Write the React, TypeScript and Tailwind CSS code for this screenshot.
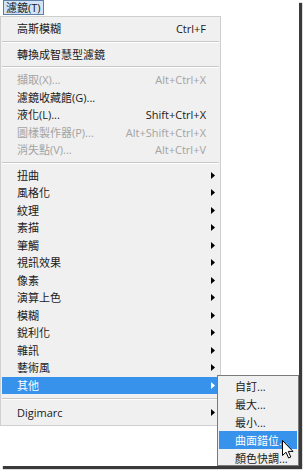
type Item = {
  label: string;
  shortcut?: string;
  disabled?: boolean;
  sub?: boolean;
  active?: boolean;
};

const top: Item[] = [{ label: "高斯模糊", shortcut: "Ctrl+F" }];
const smart: Item[] = [{ label: "轉換成智慧型濾鏡" }];
const tools: Item[] = [
  { label: "擷取(X)...", shortcut: "Alt+Ctrl+X", disabled: true },
  { label: "濾鏡收藏館(G)..." },
  { label: "液化(L)...", shortcut: "Shift+Ctrl+X" },
  { label: "圖樣製作器(P)...", shortcut: "Alt+Shift+Ctrl+X", disabled: true },
  { label: "消失點(V)...", shortcut: "Alt+Ctrl+V", disabled: true },
];
const groups: Item[] = [
  "扭曲",
  "風格化",
  "紋理",
  "素描",
  "筆觸",
  "視訊效果",
  "像素",
  "演算上色",
  "模糊",
  "銳利化",
  "雜訊",
  "藝術風",
].map((label) => ({ label, sub: true }));
groups.push({ label: "其他", sub: true, active: true });
const plugins: Item[] = [{ label: "Digimarc", sub: true }];

const others = ["自訂...", "最大...", "最小...", "曲面錯位...", "顏色快調..."];

export default function App() {
  return (
    <div className="h-[472px] w-[304px] bg-white font-['Open_Sans','Noto_Sans_CJK_TC',sans-serif] text-[11px] leading-none text-[#1a1a1a]">
      <div className="relative h-[466px] w-[299px] bg-white shadow-[3px_3px_1px_#3a3a3a]">
        {/* menu bar */}
        <div className="ml-[3px] flex h-[15px] w-[41px] items-center border border-[#5b7fa6] bg-[#d3e4f6] pl-[2px]">
          濾鏡(T)
        </div>

        {/* filter menu */}
        <div className="mt-[1px] w-[221px] border border-[#cfcfcf] bg-[#f0f0f0] px-[1px] py-[3px]">
          {top.map((it) => (
            <Row key={it.label} item={it} />
          ))}
          <Separator />
          {smart.map((it) => (
            <Row key={it.label} item={it} />
          ))}
          <Separator />
          {tools.map((it) => (
            <Row key={it.label} item={it} />
          ))}
          <Separator />
          {groups.map((it) => (
            <Row key={it.label} item={it} />
          ))}
          <div className="my-[4px] border-t border-b border-t-[#c8c8c8] border-b-white" />
          {plugins.map((it) => (
            <Row key={it.label} item={it} />
          ))}
        </div>

        {/* 其他 submenu */}
        <div className="absolute left-[217px] top-[375px] h-[91px] w-[82px] border border-[#7a7a7a] bg-[#f0f0f0] px-[1px] pt-[1px]">
          {others.map((label) => (
            <div
              key={label}
              className={
                label === "曲面錯位..."
                  ? "flex h-[18px] items-center bg-[#3692ea] pl-[16px] text-white"
                  : "flex h-[18px] items-center pl-[16px]"
              }
            >
              {label}
            </div>
          ))}
        </div>

        {/* mouse pointer */}
        <svg
          className="absolute left-[282px] top-[440px]"
          width="12"
          height="19"
          viewBox="0 0 12 19"
          aria-hidden="true"
        >
          <path
            d="M0.5 0.5 L0.5 15.5 L4 12.2 L6.6 18 L8.8 17 L6.3 11.4 L11 11.4 Z"
            fill="#fff"
            stroke="#000"
            strokeWidth="1"
            strokeLinejoin="round"
          />
        </svg>
      </div>
    </div>
  );
}

function Row({ item }: { item: Item }) {
  const tone = item.active
    ? "bg-[#3692ea] text-white"
    : item.disabled
      ? "text-[#a3a3a3]"
      : "";
  return (
    <div className={`flex h-[17.5px] items-center pl-[15px] pr-[4px] ${tone}`}>
      <span className="flex-1">{item.label}</span>
      {item.shortcut && <span>{item.shortcut}</span>}
      <span className="flex w-[9px] justify-end">
        {item.sub && (
          <svg width="4" height="7" viewBox="0 0 4 7" aria-hidden="true">
            <path d="M0 0 L4 3.5 L0 7 Z" fill={item.active ? "#fff" : "#000"} />
          </svg>
        )}
      </span>
    </div>
  );
}

function Separator() {
  return <div className="my-[3px] border-t border-b border-t-[#c8c8c8] border-b-white" />;
}
